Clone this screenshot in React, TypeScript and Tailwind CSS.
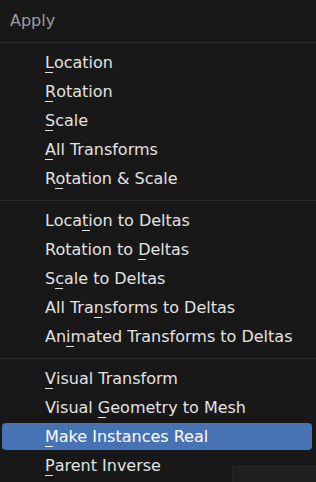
import { FC, Fragment } from "react";

type MenuItem = {
  label: string;
  key: number; // index of the mnemonic letter
  active?: boolean;
};

const sections: MenuItem[][] = [
  [
    { label: "Location", key: 0 },
    { label: "Rotation", key: 0 },
    { label: "Scale", key: 0 },
    { label: "All Transforms", key: 0 },
    { label: "Rotation & Scale", key: 1 },
  ],
  [
    { label: "Location to Deltas", key: 4 },
    { label: "Rotation to Deltas", key: 12 },
    { label: "Scale to Deltas", key: 1 },
    { label: "All Transforms to Deltas", key: 7 },
    { label: "Animated Transforms to Deltas", key: 2 },
  ],
  [
    { label: "Visual Transform", key: 0 },
    { label: "Visual Geometry to Mesh", key: 7 },
    { label: "Make Instances Real", key: 0, active: true },
    { label: "Parent Inverse", key: 0 },
  ],
];

const Label: FC<{ text: string; at: number }> = ({ text, at }) => (
  <span>
    {text.slice(0, at)}
    <span className="relative">
      {text[at]}
      <span className="absolute left-0 bottom-[-1px] w-[8px] h-px bg-current" />
    </span>
    {text.slice(at + 1)}
  </span>
);

const App: FC = () => {
  return (
    <div
      className="relative w-[316px] h-[482px] overflow-hidden bg-[#181818] text-[16px] text-[#e2e2e2]"
      style={{ fontFamily: '"DejaVu Sans", sans-serif' }}
    >
      <div className="h-[42px] flex items-center pl-[10px] text-[#9c9c9c]">Apply</div>
      {sections.map((items, s) => (
        <Fragment key={s}>
          <div className="h-px bg-[#2c2c2c]" />
          <div className="pt-[5px] pb-[7px] pl-[2px] pr-[4px]">
            {items.map((item) => (
              <div key={item.label} className="h-[29px] py-px">
                <div
                  className={
                    item.active
                      ? "h-full flex items-center pl-[43px] rounded-[4px] bg-[#4772b3] text-white"
                      : "h-full flex items-center pl-[43px]"
                  }
                >
                  <Label text={item.label} at={item.key} />
                </div>
              </div>
            ))}
          </div>
        </Fragment>
      ))}
      <div className="absolute right-0 bottom-0 w-[84px] h-[16px] bg-[#1e1e1e] border-t border-l border-[#262626]" />
    </div>
  );
};

export default App;
